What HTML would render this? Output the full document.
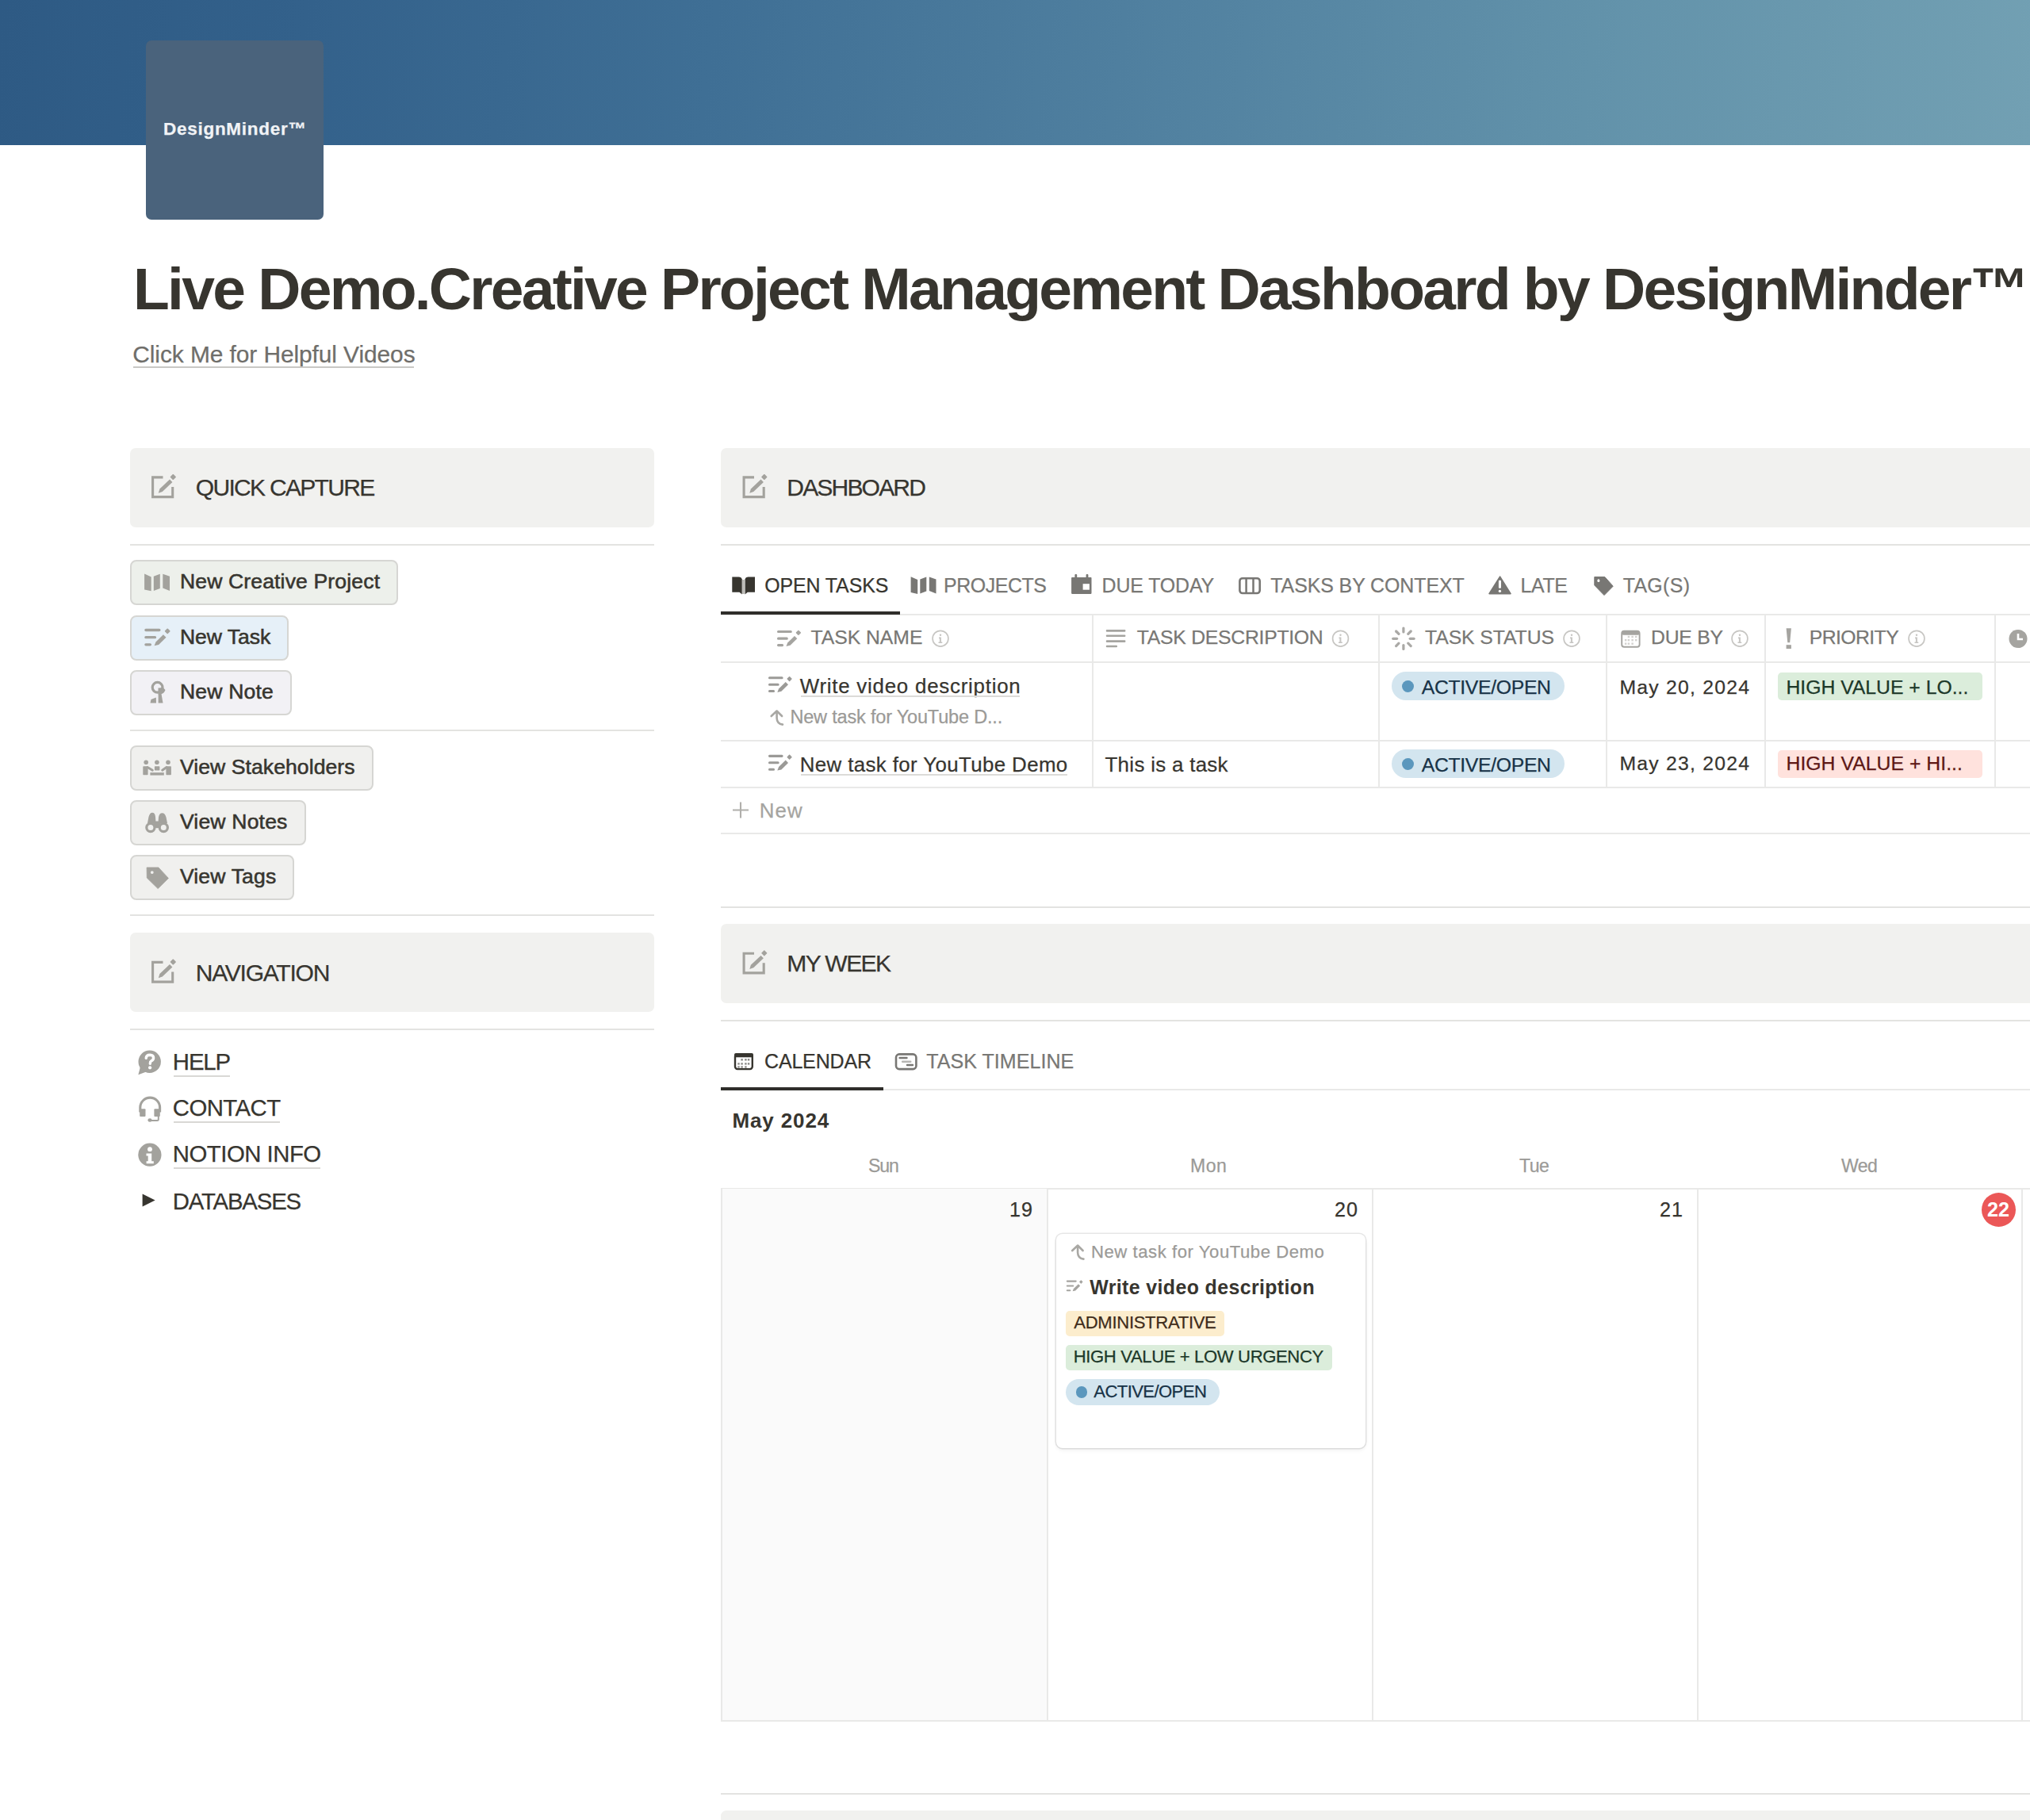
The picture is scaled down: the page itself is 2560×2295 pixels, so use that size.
<!DOCTYPE html><html><head><meta charset='utf-8'><style>
html,body{margin:0;padding:0;background:#fff;width:2560px;height:2295px;overflow:hidden;position:relative}
body{font-family:"Liberation Sans",sans-serif;color:#37352f}
.t{position:absolute;white-space:pre;line-height:1;-webkit-text-stroke:0.25px currentColor}
.r{position:absolute;box-sizing:border-box}
svg{position:absolute;overflow:visible}
</style></head><body><div class=r style="left:0px;top:0px;width:2560px;height:183px;background:linear-gradient(97deg,#2e5a84 0%,#33618b 15%,#3f6f95 35%,#4f7f9f 55%,#6292aa 78%,#72a0b3 100%)"></div>
<div class=r style="left:184px;top:51px;width:224px;height:226px;background:#4a637c;border-radius:7px"></div>
<div class=t style="left:206.1px;top:151.9px;font-size:22.5px;color:#f1f3f6;font-weight:700;letter-spacing:0.71px;">DesignMinder™</div>
<div class=t style="left:168.0px;top:327.0px;font-size:75px;color:#37352f;font-weight:700;letter-spacing:-2.73px;-webkit-text-stroke:0;">Live Demo.Creative Project Management Dashboard by DesignMinder™</div>
<div class=t style="left:167.3px;top:431.7px;font-size:29.93px;color:#6f6e6a;font-weight:400;letter-spacing:-0.09px;">Click Me for Helpful Videos</div>
<div class=r style="left:168px;top:462px;width:354px;height:2px;background:#c9c8c5"></div>
<div class=r style="left:164px;top:564.5px;width:661px;height:100px;background:#f1f1ef;border-radius:7px"></div>
<div class=t style="left:246.8px;top:600.0px;font-size:30.07px;color:#37352f;font-weight:400;letter-spacing:-1.73px;">QUICK CAPTURE</div>
<div class=r style="left:164px;top:686px;width:661px;height:2px;background:#e3e3e1"></div>
<div class=r style="left:164px;top:706px;width:338px;height:57px;background:#edf0eb;border:2px solid #d6d6d3;border-radius:8px"></div>
<div class=t style="left:226.9px;top:720.0px;font-size:26.57px;color:#37352f;font-weight:400;letter-spacing:0.14px;-webkit-text-stroke:0.55px #37352f;">New Creative Project</div>
<div class=r style="left:164px;top:776px;width:200px;height:57px;background:#e6f0f8;border:2px solid #d6d6d3;border-radius:8px"></div>
<div class=t style="left:226.9px;top:790.0px;font-size:26.57px;color:#37352f;font-weight:400;letter-spacing:-0.02px;-webkit-text-stroke:0.55px #37352f;">New Task</div>
<div class=r style="left:164px;top:845px;width:204px;height:57px;background:#f2f1f5;border:2px solid #d6d6d3;border-radius:8px"></div>
<div class=t style="left:226.9px;top:859.0px;font-size:26.57px;color:#37352f;font-weight:400;letter-spacing:0.18px;-webkit-text-stroke:0.55px #37352f;">New Note</div>
<div class=r style="left:164px;top:919.5px;width:661px;height:2px;background:#e3e3e1"></div>
<div class=r style="left:164px;top:940px;width:307px;height:57px;background:#f0f0ee;border:2px solid #d6d6d3;border-radius:8px"></div>
<div class=t style="left:226.9px;top:954.0px;font-size:26.57px;color:#37352f;font-weight:400;letter-spacing:0.07px;-webkit-text-stroke:0.55px #37352f;">View Stakeholders</div>
<div class=r style="left:164px;top:1009px;width:222px;height:57px;background:#f0f0ee;border:2px solid #d6d6d3;border-radius:8px"></div>
<div class=t style="left:226.9px;top:1023.0px;font-size:26.57px;color:#37352f;font-weight:400;letter-spacing:0.18px;-webkit-text-stroke:0.55px #37352f;">View Notes</div>
<div class=r style="left:164px;top:1078px;width:207px;height:57px;background:#f0f0ee;border:2px solid #d6d6d3;border-radius:8px"></div>
<div class=t style="left:226.9px;top:1092.0px;font-size:26.57px;color:#37352f;font-weight:400;letter-spacing:0.15px;-webkit-text-stroke:0.55px #37352f;">View Tags</div>
<div class=r style="left:164px;top:1153px;width:661px;height:2px;background:#e3e3e1"></div>
<div class=r style="left:164px;top:1176px;width:661px;height:100px;background:#f1f1ef;border-radius:7px"></div>
<div class=t style="left:246.8px;top:1211.5px;font-size:30.07px;color:#37352f;font-weight:400;letter-spacing:-1.26px;">NAVIGATION</div>
<div class=r style="left:164px;top:1296.5px;width:661px;height:2px;background:#e3e3e1"></div>
<div class=t style="left:217.8px;top:1324.1px;font-size:29.37px;color:#37352f;font-weight:400;letter-spacing:-1.12px;">HELP</div>
<div class=r style="left:219px;top:1356px;width:71px;height:2px;background:#d9d8d5"></div>
<div class=t style="left:217.8px;top:1382.1px;font-size:29.37px;color:#37352f;font-weight:400;letter-spacing:-0.56px;">CONTACT</div>
<div class=r style="left:219px;top:1414px;width:134px;height:2px;background:#d9d8d5"></div>
<div class=t style="left:217.8px;top:1440.1px;font-size:29.37px;color:#37352f;font-weight:400;letter-spacing:-0.51px;">NOTION INFO</div>
<div class=r style="left:219px;top:1472px;width:185px;height:2px;background:#d9d8d5"></div>
<div class=t style="left:217.8px;top:1499.6px;font-size:29.37px;color:#37352f;font-weight:400;letter-spacing:-1.19px;">DATABASES</div>
<div class=r style="left:909px;top:564.5px;width:1700px;height:100px;background:#f1f1ef;border-radius:7px"></div>
<div class=t style="left:992.3px;top:600.0px;font-size:30.07px;color:#37352f;font-weight:400;letter-spacing:-1.85px;">DASHBOARD</div>
<div class=r style="left:909px;top:686px;width:1700px;height:2px;background:#e3e3e1"></div>
<div class=t style="left:964.3px;top:726.3px;font-size:24.9px;color:#37352f;font-weight:400;letter-spacing:-0.09px;">OPEN TASKS</div>
<div class=t style="left:1190.0px;top:726.3px;font-size:24.9px;color:#787774;font-weight:400;letter-spacing:-0.40px;">PROJECTS</div>
<div class=t style="left:1389.6px;top:726.3px;font-size:24.9px;color:#787774;font-weight:400;letter-spacing:-0.11px;">DUE TODAY</div>
<div class=t style="left:1602.3px;top:726.3px;font-size:24.9px;color:#787774;font-weight:400;letter-spacing:-0.06px;">TASKS BY CONTEXT</div>
<div class=t style="left:1917.6px;top:726.3px;font-size:24.9px;color:#787774;font-weight:400;letter-spacing:-0.34px;">LATE</div>
<div class=t style="left:2046.7px;top:726.3px;font-size:24.9px;color:#787774;font-weight:400;letter-spacing:0.36px;">TAG(S)</div>
<div class=r style="left:909px;top:774px;width:1700px;height:2px;background:#e9e9e8"></div>
<div class=r style="left:909px;top:771px;width:226px;height:4px;background:#2f2e2b"></div>
<div class=r style="left:909px;top:834.3px;width:1700px;height:2px;background:#e9e9e8"></div>
<div class=r style="left:909px;top:932.5px;width:1700px;height:2px;background:#e9e9e8"></div>
<div class=r style="left:909px;top:991.8px;width:1700px;height:2px;background:#e9e9e8"></div>
<div class=r style="left:909px;top:1049.5px;width:1700px;height:2px;background:#e9e9e8"></div>
<div class=r style="left:1376.6px;top:775px;width:2px;height:218px;background:#e9e9e8"></div>
<div class=r style="left:1738px;top:775px;width:2px;height:218px;background:#e9e9e8"></div>
<div class=r style="left:2025.2px;top:775px;width:2px;height:218px;background:#e9e9e8"></div>
<div class=r style="left:2225px;top:775px;width:2px;height:218px;background:#e9e9e8"></div>
<div class=r style="left:2514.7px;top:775px;width:2px;height:218px;background:#e9e9e8"></div>
<div class=t style="left:1022.5px;top:791.5px;font-size:24.76px;color:#787774;font-weight:400;letter-spacing:-0.03px;">TASK NAME</div>
<div class=t style="left:1433.8px;top:791.5px;font-size:24.76px;color:#787774;font-weight:400;letter-spacing:-0.26px;">TASK DESCRIPTION</div>
<div class=t style="left:1797.0px;top:791.5px;font-size:24.76px;color:#787774;font-weight:400;letter-spacing:-0.07px;">TASK STATUS</div>
<div class=t style="left:2082.0px;top:791.5px;font-size:24.76px;color:#787774;font-weight:400;letter-spacing:-0.24px;">DUE BY</div>
<div class=t style="left:2281.7px;top:791.5px;font-size:24.76px;color:#787774;font-weight:400;letter-spacing:-0.56px;">PRIORITY</div>
<div class=t style="left:1008.7px;top:852.6px;font-size:25.87px;color:#37352f;font-weight:400;letter-spacing:0.77px;">Write video description</div>
<div class=r style="left:1009.7px;top:877px;width:276px;height:2px;background:#dcdbd8"></div>
<div class=t style="left:996.4px;top:893.3px;font-size:23.5px;color:#9b9a97;font-weight:400;letter-spacing:-0.18px;">New task for YouTube D...</div>
<div class=t style="left:1008.7px;top:952.1px;font-size:25.87px;color:#37352f;font-weight:400;letter-spacing:0.39px;">New task for YouTube Demo</div>
<div class=r style="left:1009.7px;top:976px;width:336px;height:2px;background:#dcdbd8"></div>
<div class=t style="left:1393.5px;top:952.1px;font-size:25.87px;color:#37352f;font-weight:400;letter-spacing:0.32px;">This is a task</div>
<div class=r style="left:1755.3px;top:847.3px;width:217.5px;height:35.7px;background:#d3e5ef;border-radius:18px"></div>
<div class=r style="left:1768.3px;top:858.3px;width:15px;height:15px;background:#5b97bd;border-radius:50%"></div>
<div class=t style="left:1792.7px;top:854.6px;font-size:24.76px;color:#183347;font-weight:400;letter-spacing:-0.31px;">ACTIVE/OPEN</div>
<div class=r style="left:1755.3px;top:945.3px;width:217.5px;height:35.7px;background:#d3e5ef;border-radius:18px"></div>
<div class=r style="left:1768.3px;top:956.3px;width:15px;height:15px;background:#5b97bd;border-radius:50%"></div>
<div class=t style="left:1792.7px;top:952.6px;font-size:24.76px;color:#183347;font-weight:400;letter-spacing:-0.31px;">ACTIVE/OPEN</div>
<div class=t style="left:2042.4px;top:854.6px;font-size:24.76px;color:#37352f;font-weight:400;letter-spacing:1.24px;">May 20, 2024</div>
<div class=t style="left:2042.4px;top:951.3px;font-size:24.76px;color:#37352f;font-weight:400;letter-spacing:1.24px;">May 23, 2024</div>
<div class=r style="left:2241.8px;top:847.6px;width:258.2px;height:35.2px;background:#dbeddb;border-radius:5px"></div>
<div class=t style="left:2252.5px;top:854.6px;font-size:24.76px;color:#1c3829;font-weight:400;letter-spacing:-0.01px;">HIGH VALUE + LO...</div>
<div class=r style="left:2241.8px;top:945.5px;width:258.2px;height:35.2px;background:#ffe2dd;border-radius:5px"></div>
<div class=t style="left:2252.5px;top:951.3px;font-size:24.76px;color:#5d1715;font-weight:400;letter-spacing:0.04px;">HIGH VALUE + HI...</div>
<div class=t style="left:957.7px;top:1010.1px;font-size:25.87px;color:#a5a4a0;font-weight:400;letter-spacing:1.17px;">New</div>
<div class=r style="left:909px;top:1142.5px;width:1700px;height:2px;background:#e3e3e1"></div>
<div class=r style="left:909px;top:1164.8px;width:1700px;height:100px;background:#f1f1ef;border-radius:7px"></div>
<div class=t style="left:992.3px;top:1200.3px;font-size:30.07px;color:#37352f;font-weight:400;letter-spacing:-1.61px;">MY WEEK</div>
<div class=r style="left:909px;top:1286px;width:1700px;height:2px;background:#e3e3e1"></div>
<div class=t style="left:964.0px;top:1326.4px;font-size:25.03px;color:#37352f;font-weight:400;letter-spacing:-0.18px;">CALENDAR</div>
<div class=t style="left:1168.3px;top:1326.4px;font-size:25.03px;color:#787774;font-weight:400;letter-spacing:0.05px;">TASK TIMELINE</div>
<div class=r style="left:909px;top:1373px;width:1700px;height:2px;background:#e9e9e8"></div>
<div class=r style="left:909px;top:1371px;width:205px;height:4px;background:#2f2e2b"></div>
<div class=t style="left:923.5px;top:1400.0px;font-size:26.01px;color:#37352f;font-weight:700;letter-spacing:0.86px;-webkit-text-stroke:0;">May 2024</div>
<div class=r style="left:910px;top:1498px;width:1650px;height:2px;background:#e9e9e8"></div>
<div class=r style="left:910px;top:1499px;width:411px;height:671px;background:#fafafa"></div>
<div class=r style="left:909px;top:2168.5px;width:1651px;height:2px;background:#e9e9e8"></div>
<div class=r style="left:909px;top:1498px;width:2px;height:672px;background:#e9e9e8"></div>
<div class=r style="left:1320px;top:1498px;width:2px;height:672px;background:#e9e9e8"></div>
<div class=r style="left:1730px;top:1498px;width:2px;height:672px;background:#e9e9e8"></div>
<div class=r style="left:2140px;top:1498px;width:2px;height:672px;background:#e9e9e8"></div>
<div class=r style="left:2549px;top:1498px;width:2px;height:672px;background:#e9e9e8"></div>
<div class=t style="left:1095.0px;top:1459.1px;font-size:23.08px;color:#9b9a97;font-weight:400;letter-spacing:-1.07px;">Sun</div>
<div class=t style="left:1501.1px;top:1459.1px;font-size:23.08px;color:#9b9a97;font-weight:400;letter-spacing:0.47px;">Mon</div>
<div class=t style="left:1916.1px;top:1459.1px;font-size:23.08px;color:#9b9a97;font-weight:400;letter-spacing:-0.54px;">Tue</div>
<div class=t style="left:2322.1px;top:1459.1px;font-size:23.08px;color:#9b9a97;font-weight:400;letter-spacing:-0.60px;">Wed</div>
<div class=t style="left:1273.0px;top:1513.2px;font-size:25.17px;color:#37352f;font-weight:400;letter-spacing:1.03px;">19</div>
<div class=t style="left:1683.0px;top:1513.2px;font-size:25.17px;color:#37352f;font-weight:400;letter-spacing:1.03px;">20</div>
<div class=t style="left:2093.0px;top:1513.2px;font-size:25.17px;color:#37352f;font-weight:400;letter-spacing:1.03px;">21</div>
<div class=r style="left:2498.7px;top:1503.8px;width:43.5px;height:43.5px;background:#eb5757;border-radius:50%"></div>
<div class=t style="left:2506.0px;top:1513.2px;font-size:25.17px;color:#fff;font-weight:700;letter-spacing:0.03px;-webkit-text-stroke:0;">22</div>
<div class=r style="left:1332px;top:1555.5px;width:390px;height:270px;background:#fff;border-radius:8px;box-shadow:0 0 0 1.5px rgba(15,15,15,0.1),0 3px 5px rgba(15,15,15,0.06)"></div>
<div class=t style="left:1376.0px;top:1567.8px;font-size:22.1px;color:#9b9a97;font-weight:400;letter-spacing:0.56px;">New task for YouTube Demo</div>
<div class=t style="left:1374.3px;top:1610.7px;font-size:24.9px;color:#37352f;font-weight:700;letter-spacing:0.39px;-webkit-text-stroke:0;">Write video description</div>
<div class=r style="left:1343.8px;top:1652.5px;width:200px;height:32.5px;background:#fcedcd;border-radius:5px"></div>
<div class=t style="left:1354.3px;top:1656.8px;font-size:22.1px;color:#402c1b;font-weight:400;letter-spacing:-0.32px;">ADMINISTRATIVE</div>
<div class=r style="left:1343.8px;top:1695.8px;width:336px;height:32.5px;background:#dbeddb;border-radius:5px"></div>
<div class=t style="left:1353.7px;top:1700.3px;font-size:22.1px;color:#1c3829;font-weight:400;letter-spacing:-0.38px;">HIGH VALUE + LOW URGENCY</div>
<div class=r style="left:1343.8px;top:1739.2px;width:194px;height:32.5px;background:#d3e5ef;border-radius:17px"></div>
<div class=r style="left:1356.8px;top:1748.2px;width:14.6px;height:14.6px;background:#5b97bd;border-radius:50%"></div>
<div class=t style="left:1379.3px;top:1743.7px;font-size:22.1px;color:#183347;font-weight:400;letter-spacing:-0.60px;">ACTIVE/OPEN</div>
<div class=r style="left:909px;top:2261px;width:1700px;height:2px;background:#e3e3e1"></div>
<div class=r style="left:909px;top:2283.3px;width:1700px;height:100px;background:#f1f1ef;border-radius:7px"></div>
<svg style="left:0;top:0" width="2560" height="2295" viewBox="0 0 2560 2295"><g transform="translate(191,598.0)" fill="#a3a29d"><path d="M14.5 3.9H1.6V28.6H26.7V16" fill="none" stroke="#a3a29d" stroke-width="3.1"/><path d="M8.8 23.8 L10.4 18.4 L23 6.6 L26.4 10 L13.8 21.9 Z"/><rect x="24.6" y="0.8" width="5.4" height="5.4" rx="0.6" transform="rotate(45 27.3 3.5)"/></g><g transform="translate(182.1,723.6)" fill="#a3a29d"><path d="M0 0 L8.6 3.9 V21.7 L0 19.9 Z"/><path d="M11.7 3.2 L19.7 0.2 V18.4 L11.7 21.4 Z"/><path d="M23.2 0.2 L31.9 3.2 V21.3 L23.2 17.8 Z"/></g><g transform="translate(182.3,792.8) scale(1.0)" fill="#a3a29d" stroke="#a3a29d"><path d="M1.6 1.7H18.6 M1.6 10.9H13.2 M1.6 20H7.1" stroke-width="3.3" stroke-linecap="round" fill="none"/><path d="M12.3 21.4 L14.2 16.6 L23.6 7.4 L27.2 11 L17.8 20.2 Z" stroke="none"/><rect x="26.3" y="0.5" width="5.2" height="5.2" rx="0.8" transform="rotate(45 28.9 3.1)" stroke="none"/></g><g fill="#a3a29d"><circle cx="198.6" cy="866.8" r="6.4" fill="none" stroke="#a3a29d" stroke-width="3.2"/><path d="M199.5 867.5 Q203 868 204.7 866 L208.5 870 Q207 874.5 202.5 875.5 L199.5 875.5 Z"/><path d="M189.5 886.5 L190.5 882 L196.8 879.5 L197 886.5 Z"/><path d="M199.6 875 H203.5 L205.5 886.5 H199.6 Z"/></g><g fill="#a3a29d"><circle cx="184.2" cy="961.3" r="2.8"/><circle cx="197.9" cy="961.3" r="2.8"/><circle cx="212" cy="961.3" r="2.8"/><rect x="180.3" y="966.3" width="6.3" height="11" rx="0.8"/><rect x="209.4" y="966.3" width="6.5" height="11" rx="0.8"/><rect x="194.9" y="966.3" width="6.5" height="5.3" rx="0.8"/><path d="M186 967.5 L192.3 971.2 M210 967.5 L204.7 971.2" stroke="#a3a29d" stroke-width="3" stroke-linecap="round"/><rect x="189.4" y="974.2" width="17.4" height="3.4"/></g><g fill="#a3a29d"><circle cx="189.9" cy="1043.6" r="5.1" fill="none" stroke="#a3a29d" stroke-width="3.2"/><circle cx="206.3" cy="1043.6" r="5.1" fill="none" stroke="#a3a29d" stroke-width="3.2"/><path d="M186 1038 L187.5 1030 Q189 1024.8 192 1024.8 Q195.5 1024.8 196 1030 L196.4 1035.5 H199.6 L200 1030.5 Q200.8 1025.3 204.6 1025.3 Q208 1025.3 209.5 1030.5 L211 1038 L205 1038.5 H192 Z"/><path d="M194 1037 H202 L202.5 1043 Q198 1045.5 193.8 1043 Z"/></g><path d="M185.1 1093.9 H199.9 L212.4 1107.4 L199.2 1120.6 L185.3 1107 Z" fill="#a3a29d" stroke="#a3a29d" stroke-width="0.8" stroke-linejoin="round"/><circle cx="191.8" cy="1100.1" r="1.9" fill="#f0f0ee"/><g transform="translate(191,1209.5)" fill="#a3a29d"><path d="M14.5 3.9H1.6V28.6H26.7V16" fill="none" stroke="#a3a29d" stroke-width="3.1"/><path d="M8.8 23.8 L10.4 18.4 L23 6.6 L26.4 10 L13.8 21.9 Z"/><rect x="24.6" y="0.8" width="5.4" height="5.4" rx="0.6" transform="rotate(45 27.3 3.5)"/></g><circle cx="188.7" cy="1338.8" r="14.2" fill="#a3a29d"/><path d="M174.4 1355.2 L177 1345 L184.5 1351.5 Z" fill="#a3a29d"/><path d="M184.2 1334.3 Q184.4 1330.2 189.2 1330.2 Q193.6 1330.4 193.6 1334 Q193.6 1336.6 190.6 1338 Q189.3 1338.8 189.3 1341.2" fill="none" stroke="#fff" stroke-width="3.4" stroke-linecap="round"/><circle cx="189.1" cy="1346.3" r="2.1" fill="#fff"/><path d="M176.8 1402.5 V1396.5 A12.4 12.4 0 0 1 201.6 1396.5 V1402.5" fill="none" stroke="#a3a29d" stroke-width="3.1"/><rect x="176.2" y="1398.2" width="7.3" height="9.7" rx="1" fill="#a3a29d"/><rect x="194.4" y="1398.2" width="7.4" height="9.7" rx="1" fill="#a3a29d"/><path d="M199.8 1407 V1411.5 Q199.8 1413 198 1413 H190" fill="none" stroke="#a3a29d" stroke-width="2"/><ellipse cx="189" cy="1412.5" rx="2.6" ry="2.2" fill="#a3a29d"/><circle cx="188.9" cy="1456.2" r="14.6" fill="#a3a29d"/><circle cx="189" cy="1449.2" r="2.9" fill="#fff"/><path d="M184.5 1454.6 H191.2 V1464.3 H193.8 V1467.2 H184.6 V1464.3 H186.7 V1457.4 H184.5 Z" fill="#fff"/><path d="M179.6 1505.5 L195.6 1513.5 L179.6 1521.5 Z" fill="#37352f"/><g transform="translate(936.5,598.0)" fill="#a3a29d"><path d="M14.5 3.9H1.6V28.6H26.7V16" fill="none" stroke="#a3a29d" stroke-width="3.1"/><path d="M8.8 23.8 L10.4 18.4 L23 6.6 L26.4 10 L13.8 21.9 Z"/><rect x="24.6" y="0.8" width="5.4" height="5.4" rx="0.6" transform="rotate(45 27.3 3.5)"/></g><g fill="#37352f"><path d="M923.3 727.5 H932 Q935 727.8 935.8 730.3 V749.5 L932.5 746.7 H923.3 Z"/><path d="M952 727.5 H943.3 Q940.3 727.8 939.5 730.3 V749.5 L942.8 746.7 H952 Z"/><path d="M935.8 731 H939.5 V749 H935.8 Z" fill="#bdbcb8"/></g><g transform="translate(1148.6,727.2)" fill="#787774"><path d="M0 0 L8.6 3.9 V21.7 L0 19.9 Z"/><path d="M11.7 3.2 L19.7 0.2 V18.4 L11.7 21.4 Z"/><path d="M23.2 0.2 L31.9 3.2 V21.3 L23.2 17.8 Z"/></g><rect x="1351.1" y="728.1" width="25.4" height="20.8" rx="0.8" fill="#787774"/><rect x="1355.4" y="723.9" width="2.8" height="5" rx="1.2" fill="#787774"/><rect x="1369.6" y="723.9" width="2.8" height="5" rx="1.2" fill="#787774"/><rect x="1365.6" y="736.2" width="8.3" height="7.5" fill="#fff"/><rect x="1563.4" y="729.2" width="25.3" height="18.8" rx="3.5" fill="none" stroke="#787774" stroke-width="2.6"/><path d="M1571.6 729 V748.2 M1580.5 729 V748.2" stroke="#787774" stroke-width="2.5"/><path d="M1891.6 727.2 L1905 748.6 H1878 Z" fill="#787774" stroke="#787774" stroke-width="1.6" stroke-linejoin="round"/><rect x="1889.9" y="731.8" width="3.1" height="9.9" rx="1" fill="#fff"/><circle cx="1891.4" cy="745.4" r="1.7" fill="#fff"/><path d="M2010.8 727.5 H2023.8 L2034.2 739.2 L2023 750.6 L2010.8 738 Z" fill="#787774" stroke="#787774" stroke-width="1" stroke-linejoin="round"/><ellipse cx="2015.9" cy="732.2" rx="1.5" ry="1.9" fill="#fff"/><g transform="translate(980,795) scale(0.93)" fill="#a5a4a0" stroke="#a5a4a0"><path d="M1.6 1.7H18.6 M1.6 10.9H13.2 M1.6 20H7.1" stroke-width="3.3" stroke-linecap="round" fill="none"/><path d="M12.3 21.4 L14.2 16.6 L23.6 7.4 L27.2 11 L17.8 20.2 Z" stroke="none"/><rect x="26.3" y="0.5" width="5.2" height="5.2" rx="0.8" transform="rotate(45 28.9 3.1)" stroke="none"/></g><circle cx="1186" cy="805.2" r="9.9" fill="none" stroke="#c7c6c3" stroke-width="1.7"/><circle cx="1186" cy="800.7" r="1.2" fill="#c7c6c3"/><path d="M1184 803.6 H1186.9 V809.4000000000001 H1188.3 V811.0 H1183.5 V809.4000000000001 H1184.9 V805.2 H1184 Z" fill="#c7c6c3"/><rect x="1394.8" y="794.1" width="24.6" height="2.6" rx="1" fill="#a5a4a0"/><rect x="1394.8" y="800.4" width="24.6" height="2.6" rx="1" fill="#a5a4a0"/><rect x="1394.8" y="807.3" width="24.6" height="2.6" rx="1" fill="#a5a4a0"/><rect x="1394.8" y="813.7" width="14.2" height="2.6" rx="1" fill="#a5a4a0"/><circle cx="1690.5" cy="805.2" r="9.9" fill="none" stroke="#c7c6c3" stroke-width="1.7"/><circle cx="1690.5" cy="800.7" r="1.2" fill="#c7c6c3"/><path d="M1688.5 803.6 H1691.4 V809.4000000000001 H1692.8 V811.0 H1688.0 V809.4000000000001 H1689.4 V805.2 H1688.5 Z" fill="#c7c6c3"/><line x1="1778.2" y1="805.3" x2="1783.1" y2="805.3" stroke="#aaa9a6" stroke-width="3.2" stroke-linecap="round"/><line x1="1775.8" y1="811.2" x2="1779.2" y2="814.6" stroke="#aaa9a6" stroke-width="3.2" stroke-linecap="round"/><line x1="1769.9" y1="813.6" x2="1769.9" y2="818.5" stroke="#aaa9a6" stroke-width="3.2" stroke-linecap="round"/><line x1="1764.0" y1="811.2" x2="1760.6" y2="814.6" stroke="#aaa9a6" stroke-width="3.2" stroke-linecap="round"/><line x1="1761.6" y1="805.3" x2="1756.7" y2="805.3" stroke="#aaa9a6" stroke-width="3.2" stroke-linecap="round"/><line x1="1764.0" y1="799.4" x2="1760.6" y2="796.0" stroke="#aaa9a6" stroke-width="3.2" stroke-linecap="round"/><line x1="1769.9" y1="797.0" x2="1769.9" y2="792.1" stroke="#aaa9a6" stroke-width="3.2" stroke-linecap="round"/><line x1="1775.8" y1="799.4" x2="1779.2" y2="796.0" stroke="#aaa9a6" stroke-width="3.2" stroke-linecap="round"/><circle cx="1982" cy="805.2" r="9.9" fill="none" stroke="#c7c6c3" stroke-width="1.7"/><circle cx="1982" cy="800.7" r="1.2" fill="#c7c6c3"/><path d="M1980 803.6 H1982.9 V809.4000000000001 H1984.3 V811.0 H1979.5 V809.4000000000001 H1980.9 V805.2 H1980 Z" fill="#c7c6c3"/><rect x="2045.2" y="795.8" width="22.4" height="20" rx="3" fill="none" stroke="#a5a4a0" stroke-width="1.9"/><rect x="2045.2" y="795.8" width="22.4" height="5" rx="2" fill="#a5a4a0"/><g fill="#d3d2cf"><rect x="2052.7" y="801.8" width="2.4" height="2.4"/><rect x="2057.4" y="801.8" width="2.4" height="2.4"/><rect x="2062" y="801.8" width="2.4" height="2.4"/><rect x="2048.9" y="806" width="2.4" height="2.4"/><rect x="2052.7" y="806" width="2.4" height="2.4"/><rect x="2057.4" y="806" width="2.4" height="2.4"/><rect x="2062" y="806" width="2.4" height="2.4"/><rect x="2048.9" y="810.5" width="2.4" height="2.4"/><rect x="2052.7" y="810.5" width="2.4" height="2.4"/><rect x="2057.4" y="810.5" width="2.4" height="2.4"/></g><circle cx="2194" cy="805.2" r="9.9" fill="none" stroke="#c7c6c3" stroke-width="1.7"/><circle cx="2194" cy="800.7" r="1.2" fill="#c7c6c3"/><path d="M2192 803.6 H2194.9 V809.4000000000001 H2196.3 V811.0 H2191.5 V809.4000000000001 H2192.9 V805.2 H2192 Z" fill="#c7c6c3"/><path d="M2252.6 792.3 H2258.9 L2257.2 810.3 H2254.3 Z" fill="#a5a4a0"/><rect x="2252.6" y="813.2" width="6.3" height="4.9" fill="#a5a4a0"/><circle cx="2417" cy="805.2" r="9.9" fill="none" stroke="#c7c6c3" stroke-width="1.7"/><circle cx="2417" cy="800.7" r="1.2" fill="#c7c6c3"/><path d="M2415 803.6 H2417.9 V809.4000000000001 H2419.3 V811.0 H2414.5 V809.4000000000001 H2415.9 V805.2 H2415 Z" fill="#c7c6c3"/><circle cx="2545" cy="805.5" r="11.5" fill="#a5a4a0"/><path d="M2545 799 V806 H2551" fill="none" stroke="#fff" stroke-width="2.6"/><g transform="translate(969,853.2) scale(0.92)" fill="#9b9a97" stroke="#9b9a97"><path d="M1.6 1.7H18.6 M1.6 10.9H13.2 M1.6 20H7.1" stroke-width="3.3" stroke-linecap="round" fill="none"/><path d="M12.3 21.4 L14.2 16.6 L23.6 7.4 L27.2 11 L17.8 20.2 Z" stroke="none"/><rect x="26.3" y="0.5" width="5.2" height="5.2" rx="0.8" transform="rotate(45 28.9 3.1)" stroke="none"/></g><g transform="translate(964,888) scale(1.0)"><path d="M8.7 15 L15.6 8.5 L22.1 15 M15.6 9 V17.5 Q15.8 24.8 23 25.6" fill="none" stroke="#a9a8a4" stroke-width="2.6" stroke-linecap="round" stroke-linejoin="round"/></g><g transform="translate(969,951.8) scale(0.92)" fill="#9b9a97" stroke="#9b9a97"><path d="M1.6 1.7H18.6 M1.6 10.9H13.2 M1.6 20H7.1" stroke-width="3.3" stroke-linecap="round" fill="none"/><path d="M12.3 21.4 L14.2 16.6 L23.6 7.4 L27.2 11 L17.8 20.2 Z" stroke="none"/><rect x="26.3" y="0.5" width="5.2" height="5.2" rx="0.8" transform="rotate(45 28.9 3.1)" stroke="none"/></g><path d="M934 1011.5 V1031.5 M924 1021.5 H944" stroke="#b0afab" stroke-width="2.1"/><g transform="translate(936.5,1198.3)" fill="#a3a29d"><path d="M14.5 3.9H1.6V28.6H26.7V16" fill="none" stroke="#a3a29d" stroke-width="3.1"/><path d="M8.8 23.8 L10.4 18.4 L23 6.6 L26.4 10 L13.8 21.9 Z"/><rect x="24.6" y="0.8" width="5.4" height="5.4" rx="0.6" transform="rotate(45 27.3 3.5)"/></g><rect x="927" y="1329.2" width="21.8" height="18.9" rx="3" fill="none" stroke="#37352f" stroke-width="2.4"/><rect x="926" y="1328.1" width="24" height="5.2" rx="2" fill="#37352f"/><g fill="#8a8986"><rect x="934.4" y="1335.1000000000001" width="2.4" height="2.4"/><rect x="939.1999999999999" y="1335.1000000000001" width="2.4" height="2.4"/><rect x="942.9" y="1335.1000000000001" width="2.4" height="2.4"/><rect x="930.3" y="1340.2" width="2.4" height="2.4"/><rect x="934.4" y="1340.2" width="2.4" height="2.4"/><rect x="939.1999999999999" y="1340.2" width="2.4" height="2.4"/><rect x="942.9" y="1340.2" width="2.4" height="2.4"/><rect x="930.3" y="1344.3000000000002" width="2.4" height="2.4"/><rect x="934.4" y="1344.3000000000002" width="2.4" height="2.4"/><rect x="939.1999999999999" y="1344.3000000000002" width="2.4" height="2.4"/></g><rect x="1130" y="1329.4" width="25.4" height="18.7" rx="4" fill="none" stroke="#787774" stroke-width="2.6"/><path d="M1134.6 1334 H1143.5 M1144 1343 H1151" stroke="#787774" stroke-width="2.4" stroke-linecap="round"/><path d="M1138.2 1338.7 H1148.2" stroke="#b7b6b3" stroke-width="2.6" stroke-linecap="round"/><g transform="translate(1343.5,1562) scale(1.0)"><path d="M8.7 15 L15.6 8.5 L22.1 15 M15.6 9 V17.5 Q15.8 24.8 23 25.6" fill="none" stroke="#a9a8a4" stroke-width="2.6" stroke-linecap="round" stroke-linejoin="round"/></g><g transform="translate(1344.8,1614.5) scale(0.64)" fill="#a5a4a0" stroke="#a5a4a0"><path d="M1.6 1.7H18.6 M1.6 10.9H13.2 M1.6 20H7.1" stroke-width="3.3" stroke-linecap="round" fill="none"/><path d="M12.3 21.4 L14.2 16.6 L23.6 7.4 L27.2 11 L17.8 20.2 Z" stroke="none"/><rect x="26.3" y="0.5" width="5.2" height="5.2" rx="0.8" transform="rotate(45 28.9 3.1)" stroke="none"/></g></svg></body></html>
